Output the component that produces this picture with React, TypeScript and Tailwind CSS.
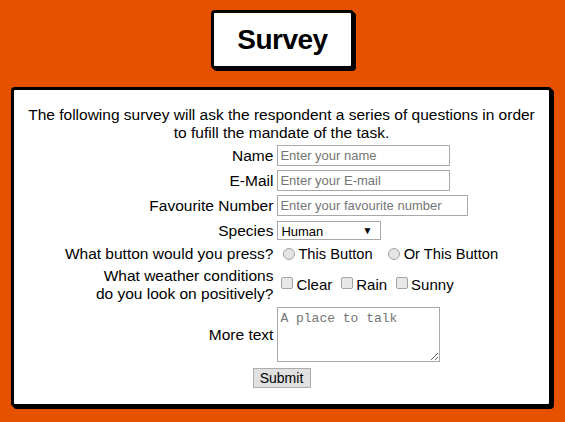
import React from 'react';

const labelCls = 'block text-right text-[15.5px] leading-[18px] text-black';
const inputCls =
  'block h-[21px] border border-[#a9a9a9] bg-white px-[2px] text-[13px] text-black placeholder:text-[#757575] outline-none';
const radioCls =
  'appearance-none w-[12px] h-[12px] rounded-full border border-[#a3a3a3] bg-[#e4e4e4] shrink-0';
const checkCls =
  'appearance-none w-[12px] h-[12px] rounded-[2px] border border-[#a3a3a3] bg-[#e8e8e8] shrink-0 -mt-[5px]';

export default function App() {
  return (
    <div
      className="min-h-screen bg-[#e65100] pt-[10px] pb-[13px] px-[11px]"
      style={{ fontFamily: '"Liberation Sans", Arial, sans-serif' }}
    >
      {/* Title */}
      <div className="mx-auto w-[143px] h-[59px] flex items-center justify-center bg-white border-[3px] border-black rounded-[4px] shadow-[2px_2px_0_#000]">
        <h1 className="text-[28px] font-bold leading-none text-black tracking-[-0.5px]">Survey</h1>
      </div>

      {/* Survey form */}
      <div className="mt-[18px] mr-[2px] bg-white border-[3px] border-black rounded-[4px] shadow-[2px_2px_0_#000] px-[10px] pt-[16px] pb-[16px]">
        <p className="text-center text-[15.5px] leading-[18px] text-black">
          The following survey will ask the respondent a series of questions in order to fufill the mandate of the task.
        </p>

        <form className="mt-[3px]" onSubmit={(e) => e.preventDefault()}>
          <div className="grid grid-cols-[auto_auto] justify-center items-center gap-x-[4px] gap-y-[4px]">
            <label className={labelCls}>Name</label>
            <input className={`${inputCls} w-[173px]`} placeholder="Enter your name" />

            <label className={labelCls}>E-Mail</label>
            <input className={`${inputCls} w-[173px]`} placeholder="Enter your E-mail" />

            <label className={labelCls}>Favourite Number</label>
            <input className={`${inputCls} w-[191px]`} placeholder="Enter your favourite number" />

            <label className={labelCls}>Species</label>
            <div className="relative w-[104px] h-[21px] flex items-center">
              <select className="appearance-none block w-full h-[19px] border border-[#a9a9a9] bg-white pl-[3px] text-[13px] text-black outline-none">
                <option>Human</option>
                <option>Alien</option>
              </select>
              <span className="absolute right-[9px] top-[6px] text-[10px] leading-none text-black pointer-events-none">▼</span>
            </div>

            <label className={labelCls}>What button would you press?</label>
            <div className="flex items-center h-[18px] text-[14.7px] leading-[18px] text-black">
              <label className="flex items-center">
                <input type="radio" name="press" className={`${radioCls} ml-[6px] mr-[3px]`} />
                This Button
              </label>
              <label className="flex items-center">
                <input type="radio" name="press" className={`${radioCls} ml-[15px] mr-[4px]`} />
                Or This Button
              </label>
            </div>

            <label className={labelCls}>
              What weather conditions
              <br />
              do you look on positively?
            </label>
            <div className="flex items-center text-[15px] leading-[18px] text-black">
              <label className="flex items-center">
                <input type="checkbox" className={`${checkCls} ml-[4px] mr-[3px]`} />
                Clear
              </label>
              <label className="flex items-center">
                <input type="checkbox" className={`${checkCls} ml-[9px] mr-[3px]`} />
                Rain
              </label>
              <label className="flex items-center">
                <input type="checkbox" className={`${checkCls} ml-[9px] mr-[3px]`} />
                Sunny
              </label>
            </div>

            <label className={labelCls}>More text</label>
            <textarea
              className="block w-[163px] h-[55px] border border-[#a9a9a9] bg-white px-[2px] py-[1px] text-[13px] text-black placeholder:text-[#757575] outline-none"
              style={{ fontFamily: '"Liberation Mono", "Courier New", monospace' }}
              placeholder="A place to talk"
            />
          </div>

          <div className="flex justify-center mt-[6px]">
            <button
              type="submit"
              className="w-[58px] h-[20px] border border-[#adadad] bg-[#e1e1e1] text-[14px] leading-none text-black"
            >
              Submit
            </button>
          </div>
        </form>
      </div>
    </div>
  );
}
